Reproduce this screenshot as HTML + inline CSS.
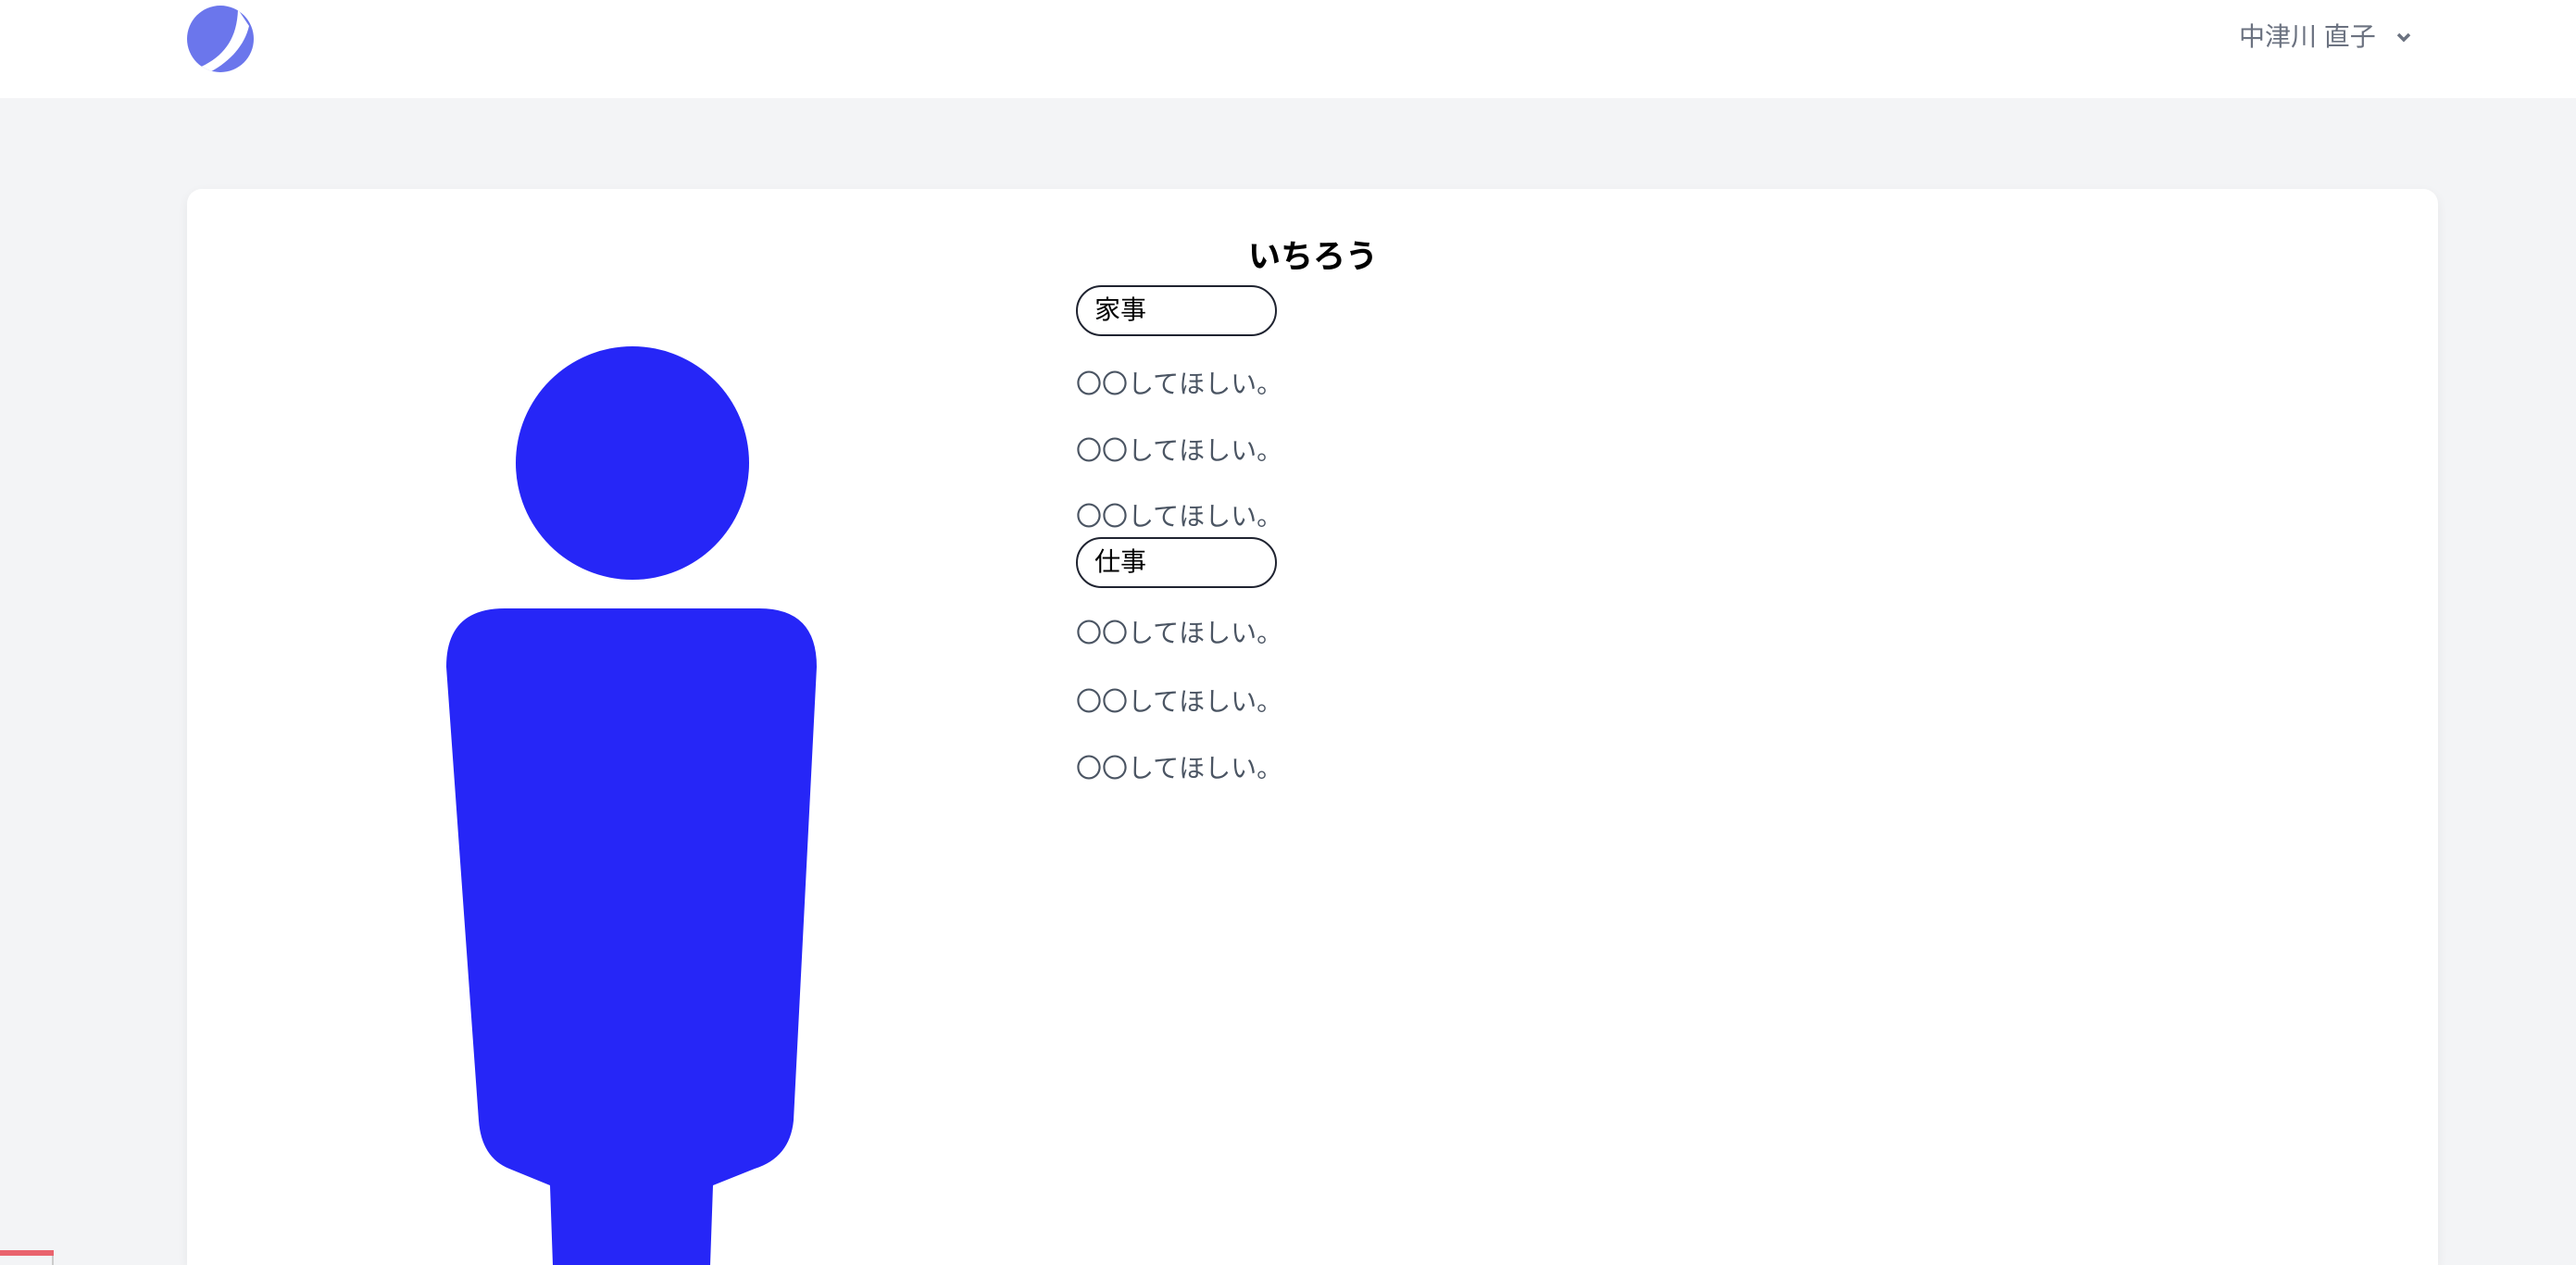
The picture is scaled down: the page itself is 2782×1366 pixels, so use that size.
<!DOCTYPE html>
<html style="margin:0;width:2782px;height:1366px;overflow:hidden"><head><meta charset="utf-8"><style>
body{margin:0;width:2782px;height:1366px;overflow:hidden;background:#f3f4f6;font-family:"Liberation Sans","Noto Sans CJK JP",sans-serif;position:relative}
.hdr{position:absolute;left:0;top:0;width:2782px;height:106px;background:#fff}
.user{position:absolute;left:2418px;top:18px;font-size:28px;color:#6b7280;line-height:44px}
.card{position:absolute;left:202px;top:204px;width:2431px;height:1162px;background:#fff;border-radius:16px 16px 0 0;box-shadow:0 4px 12px rgba(0,0,0,.06)}
.title{position:absolute;left:1348px;top:256px;font-size:35px;font-weight:bold;color:#000;line-height:44px}
.pill{position:absolute;left:1162px;width:213px;height:51px;border:2px solid #1f2330;border-radius:28px;box-sizing:content-box}
.pill span{position:absolute;left:18px;top:5px;font-size:28px;line-height:40px;color:#000}
.it{position:absolute;left:1162px;font-size:28px;color:#4b5563;line-height:40px}
</style></head><body>
<div class="hdr">
<svg style="position:absolute;left:200px;top:4px" width="76" height="76" viewBox="0 0 76 76">
<defs><clipPath id="c"><circle cx="38" cy="38" r="36"/></clipPath></defs>
<g clip-path="url(#c)"><rect width="76" height="76" fill="#6b76ec"/>
<path d="M57 6 C56 40 40 60 8 72 L18 78 C46 66 64 46 69 24 Z" fill="#fff"/></g>
</svg>
<div class="user">中津川 直子</div>
<svg style="position:absolute;left:2586px;top:32px" width="20" height="16" viewBox="0 0 20 16"><path d="M4 5 L10 11 L16 5" stroke="#6b7280" stroke-width="3.5" fill="none"/></svg>
</div>
<div class="card"></div>
<svg style="position:absolute;left:0;top:0" width="1000" height="1366">
<circle cx="683" cy="500" r="126" fill="#2626f7"/>
<path d="M545 657 L820 657 Q882 657 882 720 L857 1210 Q853 1250 815 1262 L770 1280 L767 1366 L597 1366 L594 1280 L550 1262 Q520 1250 517 1210 L482 720 Q482 657 545 657 Z" fill="#2626f7"/>
</svg>
<div class="title">いちろう</div>
<div class="pill" style="top:308px"><span>家事</span></div>
<div class="it" style="top:395px">〇〇してほしい。</div>
<div class="it" style="top:467px">〇〇してほしい。</div>
<div class="it" style="top:538px">〇〇してほしい。</div>
<div class="pill" style="top:580px"><span>仕事</span></div>
<div class="it" style="top:664px">〇〇してほしい。</div>
<div class="it" style="top:738px">〇〇してほしい。</div>
<div class="it" style="top:810px">〇〇してほしい。</div>
<div style="position:absolute;left:0;top:1350px;width:58px;height:6px;background:#e9636d"></div>
<div style="position:absolute;left:56px;top:1356px;width:2px;height:10px;background:#ccc"></div>
</body></html>
